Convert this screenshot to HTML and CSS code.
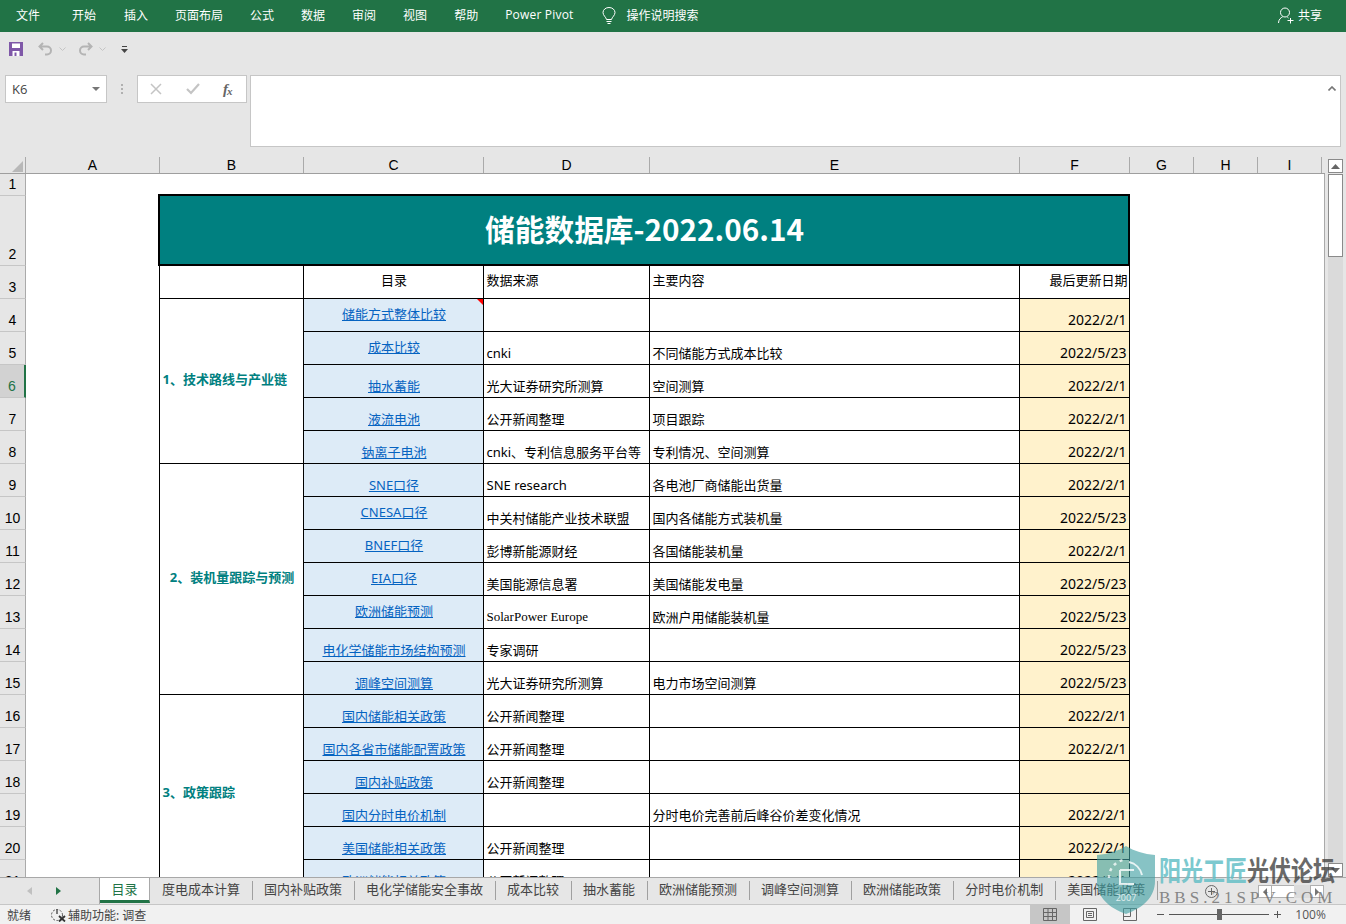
FILE: index.html
```html
<!DOCTYPE html>
<html lang="zh">
<head>
<meta charset="utf-8">
<title>储能数据库</title>
<link rel="stylesheet" href="styles.css">
</head>
<body>
<div class="app">
  <nav class="ribbon">
    <span class="rtab first">文件</span><span class="rtab second">开始</span><span class="rtab">插入</span><span class="rtab">页面布局</span><span class="rtab">公式</span><span class="rtab">数据</span><span class="rtab">审阅</span><span class="rtab">视图</span><span class="rtab">帮助</span><span class="rtab latin">Power Pivot</span>
    <span class="search">
      <svg width="14" height="18" viewBox="0 0 14 18" fill="none" stroke="#fff" stroke-width="1"><path d="M4.5 12.5C4 10 1 8.500 1 5.500a6 5 0 0 1 12 0c0 3-3 4.500-3.500 7z"/><path d="M4.500 14.500h5M5.500 16.500h3"/></svg>
      <span>操作说明搜索</span>
    </span>
    <span class="share">
      <svg width="16" height="17" viewBox="0 0 16 17" fill="none" stroke="#fff" stroke-width="1"><circle cx="7" cy="5.500" r="4.500"/><path d="M.5 16c0-3.500 2.500-5.500 4-6M9.500 10.500l1 .5M12.500 11v5.500M9.500 13.500h6"/></svg>
      <span>共享</span>
    </span>
  </nav>

  <div class="qat">
    <svg class="q-save" width="14" height="14" viewBox="0 0 14 14"><path fill="#7f58a8" d="M0 0h14v14H0z"/><path fill="#fff" d="M3 1.500h8v4.500H3zM3.500 9h7v5h-7z"/><path fill="#7f58a8" d="M5.500 10.500h2v3.500h-2z"/></svg>
    <svg class="q-undo" width="15" height="14" viewBox="0 0 15 14" fill="none" stroke="#b4b4b4" stroke-width="2"><path d="M5 1L1.500 4.500 5 8M2 4.500h7a4 4 0 0 1 0 8H7"/></svg>
    <svg class="q-chev" width="7" height="4" viewBox="0 0 7 4" fill="none" stroke="#c4c4c4"><path d="M.5.500l3 3 3-3"/></svg>
    <svg class="q-redo" width="15" height="14" viewBox="0 0 15 14" fill="none" stroke="#b4b4b4" stroke-width="2"><path d="M10 1l3.500 3.500L10 8M13 4.500H6a4 4 0 0 0 0 8h2"/></svg>
    <svg class="q-chev" width="7" height="4" viewBox="0 0 7 4" fill="none" stroke="#c4c4c4"><path d="M.5.500l3 3 3-3"/></svg>
    <svg class="q-more" width="7" height="7" viewBox="0 0 7 7"><path fill="#444" d="M1 0h5v1H1zM0 3h7L3.500 7z"/></svg>
  </div>

  <div class="fbar">
    <div class="namebox"><span>K6</span><svg width="8" height="4" viewBox="0 0 8 4"><path fill="#777" d="M0 0h8L4 4z"/></svg></div>
    <div class="fdots"><i></i><i></i><i></i></div>
    <div class="fbtns">
      <svg width="12" height="12" viewBox="0 0 12 12" stroke="#c4c4c4" stroke-width="1.500"><path d="M1 1l10 10M11 1L1 11"/></svg>
      <svg width="14" height="12" viewBox="0 0 14 12" fill="none" stroke="#c4c4c4" stroke-width="2.200"><path d="M1 6l4 4 8-9"/></svg>
      <span class="fx">f<sub>x</sub></span>
    </div>
    <div class="finput"><svg width="8" height="5" viewBox="0 0 8 5" fill="none" stroke="#777" stroke-width="1.600"><path d="M.5 4.500L4 1l3.500 3.500"/></svg></div>
  </div>

  <div class="sheetwrap">
    <div class="sheetmain">
      <div class="colheads">
        <div class="corner"><svg width="11" height="11" viewBox="0 0 11 11"><path fill="#b8b8b8" d="M11 0v11H0z"/></svg></div>
        <div class="ch wa">A</div><div class="ch wb">B</div><div class="ch wc">C</div><div class="ch wd">D</div><div class="ch we">E</div><div class="ch wf">F</div><div class="ch wg">G</div><div class="ch wg">H</div><div class="ch wg">I</div>
      </div>
      <div class="gridarea">
        <div class="rowheads">
          <div class="rh r1">1</div><div class="rh r2">2</div><div class="rh">3</div><div class="rh">4</div><div class="rh">5</div><div class="rh sel">6</div><div class="rh">7</div><div class="rh">8</div><div class="rh">9</div><div class="rh">10</div><div class="rh">11</div><div class="rh">12</div><div class="rh">13</div><div class="rh">14</div><div class="rh">15</div><div class="rh">16</div><div class="rh">17</div><div class="rh">18</div><div class="rh">19</div><div class="rh">20</div><div class="rh">21</div>
        </div>
        <div class="cells">
          <table class="data">
            <colgroup><col class="cb"><col class="cc"><col class="cd"><col class="ce"><col class="cf"></colgroup>
            <tr class="title"><td colspan="5">储能数据库-2022.06.14</td></tr>
            <tr class="row head"><td></td><td class="mid">目录</td><td>数据来源</td><td>主要内容</td><td class="right">最后更新日期</td></tr>
            <tr class="row"><td rowspan="5" class="grp">1、技术路线与产业链</td><td class="lnk vc note"><a>储能方式整体比较</a></td><td></td><td></td><td class="date">2022/2/1</td></tr>
            <tr class="row"><td class="lnk vc"><a>成本比较</a></td><td>cnki</td><td>不同储能方式成本比较</td><td class="date">2022/5/23</td></tr>
            <tr class="row"><td class="lnk"><a>抽水蓄能</a></td><td>光大证券研究所测算</td><td>空间测算</td><td class="date">2022/2/1</td></tr>
            <tr class="row"><td class="lnk"><a>液流电池</a></td><td>公开新闻整理</td><td>项目跟踪</td><td class="date">2022/2/1</td></tr>
            <tr class="row"><td class="lnk"><a>钠离子电池</a></td><td>cnki、专利信息服务平台等</td><td>专利情况、空间测算</td><td class="date">2022/2/1</td></tr>
            <tr class="row"><td rowspan="7" class="grp ctr">2、装机量跟踪与预测</td><td class="lnk"><a>SNE口径</a></td><td>SNE research</td><td>各电池厂商储能出货量</td><td class="date">2022/2/1</td></tr>
            <tr class="row"><td class="lnk vc"><a>CNESA口径</a></td><td>中关村储能产业技术联盟</td><td>国内各储能方式装机量</td><td class="date">2022/5/23</td></tr>
            <tr class="row"><td class="lnk vc"><a>BNEF口径</a></td><td>彭博新能源财经</td><td>各国储能装机量</td><td class="date">2022/2/1</td></tr>
            <tr class="row"><td class="lnk vc"><a>EIA口径</a></td><td>美国能源信息署</td><td>美国储能发电量</td><td class="date">2022/5/23</td></tr>
            <tr class="row"><td class="lnk vc"><a>欧洲储能预测</a></td><td class="serif">SolarPower Europe</td><td>欧洲户用储能装机量</td><td class="date">2022/5/23</td></tr>
            <tr class="row"><td class="lnk"><a>电化学储能市场结构预测</a></td><td>专家调研</td><td></td><td class="date">2022/5/23</td></tr>
            <tr class="row"><td class="lnk"><a>调峰空间测算</a></td><td>光大证券研究所测算</td><td>电力市场空间测算</td><td class="date">2022/5/23</td></tr>
            <tr class="row"><td rowspan="6" class="grp">3、政策跟踪</td><td class="lnk"><a>国内储能相关政策</a></td><td>公开新闻整理</td><td></td><td class="date">2022/2/1</td></tr>
            <tr class="row"><td class="lnk"><a>国内各省市储能配置政策</a></td><td>公开新闻整理</td><td></td><td class="date">2022/2/1</td></tr>
            <tr class="row"><td class="lnk"><a>国内补贴政策</a></td><td>公开新闻整理</td><td></td><td class="date"></td></tr>
            <tr class="row"><td class="lnk"><a>国内分时电价机制</a></td><td></td><td>分时电价完善前后峰谷价差变化情况</td><td class="date">2022/2/1</td></tr>
            <tr class="row"><td class="lnk"><a>美国储能相关政策</a></td><td>公开新闻整理</td><td></td><td class="date">2022/2/1</td></tr>
            <tr class="row"><td class="lnk"><a>欧洲储能相关政策</a></td><td>公开新闻整理</td><td></td><td class="date">2022/2/1</td></tr>
          </table>
        </div>
      </div>
    </div>
    <div class="vscroll">
      <div class="sbtn"><svg width="9" height="5" viewBox="0 0 9 5"><path fill="#666" d="M4.500 0L9 5H0z"/></svg></div>
      <div class="vthumb"></div>
      <div class="vtrack"></div>
      <div class="sbtn"><svg width="9" height="5" viewBox="0 0 9 5"><path fill="#666" d="M0 0h9L4.500 5z"/></svg></div>
    </div>
  </div>

  <div class="tabbar">
    <div class="tabnav">
      <svg width="5" height="8" viewBox="0 0 5 8"><path fill="#c0c0c0" d="M5 0v8L0 4z"/></svg>
      <svg width="5" height="8" viewBox="0 0 5 8"><path fill="#217346" d="M0 0v8l5-4z"/></svg>
    </div>
    <div class="stab active">目录</div><div class="stab">度电成本计算</div><div class="stab">国内补贴政策</div><div class="stab">电化学储能安全事故</div><div class="stab">成本比较</div><div class="stab">抽水蓄能</div><div class="stab">欧洲储能预测</div><div class="stab">调峰空间测算</div><div class="stab">欧洲储能政策</div><div class="stab">分时电价机制</div><div class="stab">美国储能政策</div>
    <div class="addsheet"><svg width="13" height="13" viewBox="0 0 13 13" fill="none" stroke="#666"><circle cx="6.500" cy="6.500" r="6"/><path d="M6.500 3v7M3 6.500h7"/></svg></div>
    <div class="hscroll">
      <div class="hbtn"><svg width="4" height="8" viewBox="0 0 4 8"><path fill="#777" d="M4 0v8L0 4z"/></svg></div>
      <div class="hthumb"></div>
      <div class="htrack"></div>
      <div class="hbtn"><svg width="4" height="8" viewBox="0 0 4 8"><path fill="#777" d="M0 0v8l4-4z"/></svg></div>
    </div>
  </div>

  <footer class="status">
    <span class="ready">就绪</span>
    <svg class="acc" width="16" height="14" viewBox="0 0 16 14" fill="none" stroke="#555"><circle cx="7" cy="7" r="5.500" stroke-dasharray="2 1.500"/><path d="M7 1v5" stroke-width="1.500"/><path d="M9 8l6 5.500M15 8l-6 5.500" stroke="#333" stroke-width="1.800"/></svg>
    <span>辅助功能: 调查</span>
    <div class="views">
      <div class="view on"><svg width="14" height="13" viewBox="0 0 14 13" fill="none" stroke="#666"><path d="M.5.500h13v12H.5zM.5 4.500h13M.5 8.500h13M5 .5v12M9.500.5v12"/></svg></div>
      <div class="view"><svg width="14" height="13" viewBox="0 0 14 13" fill="none" stroke="#666"><path d="M.5.500h13v12H.5zM3.500 3.500h7v6h-7zM5 5.500h4M5 7.500h4"/></svg></div>
      <div class="view"><svg width="14" height="13" viewBox="0 0 14 13" fill="none" stroke="#666"><path d="M.5.500h13v12H.5zM.5 8.500h7v-8"/></svg></div>
    </div>
    <div class="zoomctl">
      <span class="zm"></span>
      <div class="slider"><i></i></div>
      <span class="zp"></span>
    </div>
    <span class="pct">100%</span>
  </footer>

  <div class="mark">
    <svg class="shield" width="60" height="68" viewBox="0 0 60 68"><path fill="#3d9ea2" fill-opacity=".62" d="M30 0c8 5 18 8 29 9v26c0 16-12 27-29 33C13 62 1 51 1 35V9C12 8 22 5 30 0z"/><path fill="none" stroke="#fff" stroke-opacity=".75" stroke-width="2.500" stroke-dasharray="3 4" d="M13 32a18 18 0 0 1 14-18"/><path fill="none" stroke="#fff" stroke-opacity=".8" stroke-width="2" d="M33 16a17 17 0 0 1 13 13M24 24h14M24 24v14h14"/><text x="30" y="55" text-anchor="middle" class="yr">2007</text></svg>
    <div class="marktext">
      <div class="mt1"><span class="t">阳光工匠</span><span class="g">光伏论坛</span></div>
      <div class="mt2">BBS.21SPV.COM</div>
    </div>
  </div>
</div>
</body>
</html>
```

FILE: styles.css
```css
* { box-sizing: border-box; }
html, body { margin: 0; padding: 0; }
body { font-family: "Noto Sans", "Noto Sans CJK SC", sans-serif; font-size: 13px; color: #000; }
.app { position: relative; width: 1346px; height: 924px; overflow: hidden; background: #e6e6e6; display: flex; flex-direction: column; }

.ribbon { height: 32px; flex: none; background: #217346; color: #fff; font-size: 12px; display: flex; align-items: center; gap: 27px; padding-left: 16px; padding-bottom: 3px; }
.ribbon svg { margin-top: 2px; }
.rtab { white-space: nowrap; }
.rtab.first { margin-right: 5px; }
.rtab.second { margin-right: 1px; }
.rtab.latin { font-family: "Open Sans", sans-serif; letter-spacing: .2px; }
.search { display: flex; align-items: center; gap: 11px; margin-left: 1px; }
.share { margin-left: auto; margin-right: 24px; display: flex; align-items: center; gap: 4px; }

.qat { height: 43px; flex: none; display: flex; align-items: flex-start; padding: 10px 0 0 9px; }
.q-undo { margin-left: 15px; }
.q-chev { margin: 5px 0 0 6px; }
.q-redo { margin-left: 12px; }
.q-more { margin: 4px 0 0 15px; }

.fbar { height: 72px; flex: none; display: flex; align-items: flex-start; padding-left: 5px; }
.namebox { width: 102px; height: 28px; background: #fff; border: 1px solid #c6c6c6; display: flex; align-items: center; justify-content: space-between; padding: 0 6px 0 6px; font-family: "Open Sans", sans-serif; font-size: 13px; color: #444; }
.fdots { width: 30px; height: 28px; display: flex; flex-direction: column; align-items: center; justify-content: center; gap: 2px; }
.fdots i { width: 2px; height: 2px; background: #b0b0b0; }
.fbtns { width: 110px; height: 28px; background: #fff; border: 1px solid #c6c6c6; display: flex; align-items: center; padding-left: 12px; gap: 24px; }
.fx { font-family: "Liberation Serif", serif; font-style: italic; font-weight: 700; font-size: 15px; color: #666; margin-left: -1px; line-height: 1; }
.fx sub { font-size: 11px; vertical-align: -1px; margin-left: -1px; }
.finput { width: 1091px; height: 72px; margin-left: 3px; background: #fff; border: 1px solid #c6c6c6; display: flex; justify-content: flex-end; padding: 10px 4px 0 0; }

.sheetwrap { margin-top: 10px; flex: 1; min-height: 0; display: flex; }
.sheetmain { width: 1325px; flex: none; display: flex; flex-direction: column; min-height: 0; }
.colheads { height: 17px; flex: none; display: flex; border-bottom: 1px solid #9e9e9e; font-family: "Liberation Sans", sans-serif; font-size: 14px; }
.corner { width: 26px; height: 16px; display: flex; justify-content: flex-end; align-items: flex-end; padding: 0 2px 1px 0; border-right: 1px solid #aaa; }
.ch { height: 16px; line-height: 17px; text-align: center; border-right: 1px solid #aaa; }
.wa { width: 134px; } .wb { width: 144px; } .wc { width: 180px; } .wd { width: 166px; } .we { width: 370px; } .wf { width: 110px; } .wg { width: 64px; }

.gridarea { flex: 1; min-height: 0; display: flex; overflow: hidden; }
.rowheads { width: 26px; flex: none; }
.rh { height: 33px; border-bottom: 1px solid #c6c6c6; border-right: 1px solid #aaa; font-family: "Liberation Sans", sans-serif; font-size: 14px; text-align: center; display: flex; align-items: flex-end; justify-content: center; padding-bottom: 3px; }
.rh.r1 { height: 22px; padding-bottom: 3px; }
.rh.r2 { height: 70px; }
.rh.sel { background: #d2d2d2; color: #217346; border-right: 2px solid #217346; }

.cells { flex: 1; background: #fff; border-right: 1px solid #aaa; padding: 20px 0 0 132px; overflow: hidden; }
.data { border-collapse: collapse; table-layout: fixed; width: 970px; font-size: 13px; }
.cb { width: 144px; } .cc { width: 180px; } .cd { width: 166px; } .ce { width: 370px; } .cf { width: 110px; }
.data td { border: 1px solid #000; padding: 0 2px 2px 3px; vertical-align: bottom; line-height: 18px; white-space: nowrap; overflow: hidden; }
.title { height: 70px; }
.data .title td { background: #008080; color: #fff; border: 2px solid #000; font-family: "Noto Sans CJK SC", sans-serif; font-weight: 700; font-size: 29.700px; text-align: center; vertical-align: middle; line-height: 40px; padding: 0 0 3px 1px; }
.row { height: 33px; }
.data .head td { vertical-align: middle; padding-bottom: 3px; }
.data .head .mid { text-align: center; padding-left: 2px; padding-right: 0; }
.data .head .right { text-align: right; padding-right: 1px; }
.data .grp { color: #008080; font-weight: 700; vertical-align: middle; padding-bottom: 3px; }
.data .ctr { text-align: center; padding-left: 4px; }
.data .lnk { background: #ddebf7; text-align: center; padding-left: 2px; padding-right: 0; }
.data .vc { vertical-align: middle; }
.lnk a { color: #0563c1; text-decoration: underline; }
.data .date { background: #fff2cc; text-align: right; font-size: 14px; }
.data .serif { font-family: "Liberation Serif", serif; font-size: 13px; }
.note { position: relative; }
.note::after { content: ""; position: absolute; top: 0; right: 0; border-top: 6px solid #f00; border-left: 6px solid transparent; }

.vscroll { margin: 2px 0 0 3px; width: 15px; flex: none; display: flex; flex-direction: column; }
.sbtn { height: 14px; flex: none; background: #fff; border: 1px solid #8a8a8a; display: flex; align-items: center; justify-content: center; }
.vthumb { height: 83px; flex: none; background: #fff; border: 1px solid #8a8a8a; margin-top: 1px; }
.vtrack { flex: 1; background: #dadada; }

.tabbar { height: 28px; flex: none; display: flex; border-top: 1px solid #a8a8a8; border-bottom: 1px solid #c6c6c6; position: relative; }
.tabnav { width: 100px; flex: none; display: flex; align-items: center; padding-left: 27px; gap: 24px; border-right: 1px solid #a8a8a8; }
.stab { flex: none; padding: 0 12px 0 12px; height: 19px; margin-top: 3px; line-height: 17px; color: #444; border-right: 1px solid #a0a0a0; margin-right: -1px; }
.stab.active { height: 25px; margin-top: 0; margin-right: 0; width: 50px; padding: 0; text-align: center; line-height: 23px; background: #fff; color: #217346; border-right: 1px solid #a8a8a8; border-bottom: 3px solid #217346; }
.addsheet { margin-left: 48px; align-self: center; display: flex; }
.hscroll { position: absolute; top: 7px; left: 1258px; width: 66px; height: 13px; background: #dcdcdc; display: flex; }
.hbtn { width: 14px; background: #fff; border: 1px solid #b0b0b0; display: flex; align-items: center; justify-content: center; }
.hthumb { width: 22px; background: #fff; border-top: 1px solid #b0b0b0; border-bottom: 1px solid #b0b0b0; }
.htrack { flex: 1; }

.status { height: 19px; flex: none; background: #f1f1f1; display: flex; align-items: center; font-size: 12px; color: #444; padding-left: 7px; }
.ready { margin-right: 19px; }
.acc { margin-right: 2px; }
.views { margin-left: 884px; display: flex; }
.view { width: 40px; height: 19px; display: flex; align-items: center; justify-content: center; }
.view.on { background: #c6c6c6; }
.zoomctl { margin-left: 7px; display: flex; align-items: center; gap: 5px; width: 124px; }
.zm { width: 7px; height: 1px; background: #555; }
.zp { width: 7px; height: 7px; background: linear-gradient(#555,#555) center/7px 1px no-repeat, linear-gradient(#555,#555) center/1px 7px no-repeat; }
.slider { width: 100px; height: 1px; background: #555; position: relative; }
.slider i { position: absolute; left: 48px; top: -5px; width: 5px; height: 11px; background: #666; }
.pct { margin-left: 14px; font-family: "Open Sans", sans-serif; font-size: 12px; color: #555; }

.mark { position: absolute; left: 1096px; top: 846px; display: flex; gap: 3px; pointer-events: none; }
.yr { font-family: "Open Sans", sans-serif; font-size: 9px; fill: #fff; fill-opacity: .8; }
.marktext { padding-top: 4px; width: 180px; }
.mt1 { display: flex; font-family: "Noto Sans CJK SC", sans-serif; font-size: 22px; line-height: 30px; font-weight: 700; white-space: nowrap; transform: scaleY(1.25); transform-origin: top left; }
.mt1 .t { color: #66c0c7; opacity: .85; }
.mt1 .g { color: #444; opacity: .8; }
.mt2 { margin-top: 12px; font-family: "Liberation Serif", serif; font-size: 17px; line-height: 12px; letter-spacing: 4px; color: #666; opacity: .75; white-space: nowrap; }
```
